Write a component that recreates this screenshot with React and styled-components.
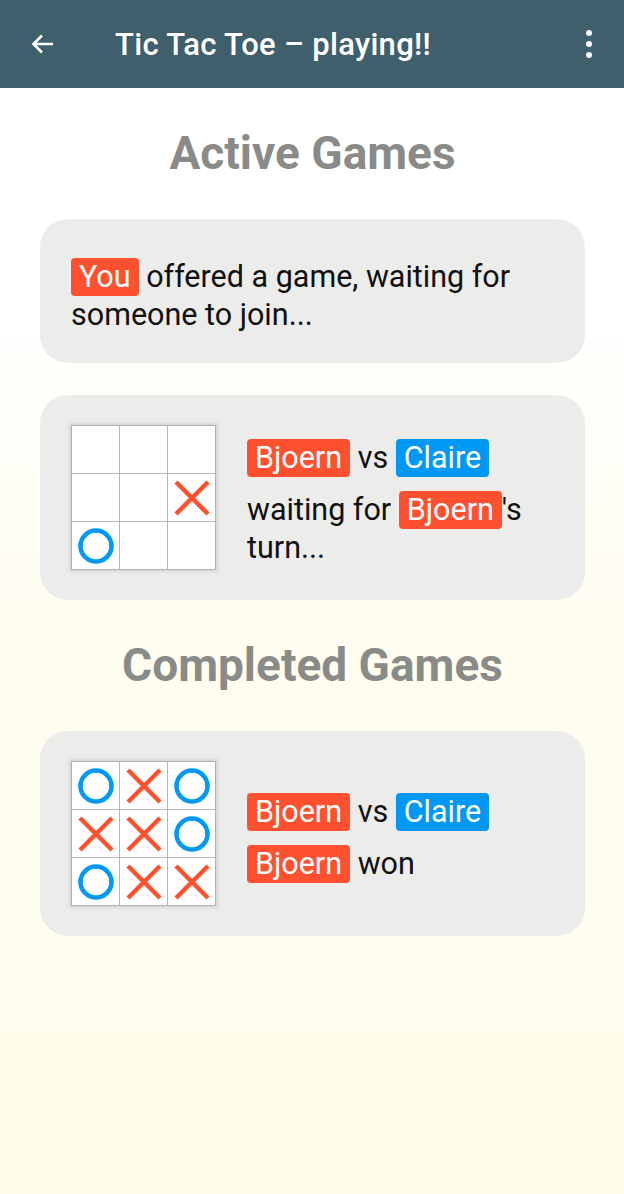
import React from 'react'
import styled, { createGlobalStyle } from 'styled-components'

const GlobalStyle = createGlobalStyle`
  html, body {
    margin: 0;
    padding: 0;
  }
  body {
    font-family: Roboto, "Noto Sans", "Liberation Sans", sans-serif;
    background: #fffdee;
  }
`

const ORANGE = '#ff512f'
const BLUE = '#0098f5'

const activeBoard = [
  '', '', '',
  '', '', 'x',
  'o', '', ''
]

const doneBoard = [
  'o', 'x', 'o',
  'x', 'x', 'o',
  'o', 'x', 'x'
]

function Mark({ kind }) {
  if (kind === 'o') {
    return (
      <svg width="40" height="40" viewBox="0 0 40 40">
        <circle cx="20" cy="20" r="15.5" fill="none" stroke={BLUE} strokeWidth="4.5" />
      </svg>
    )
  }
  if (kind === 'x') {
    return (
      <svg width="40" height="40" viewBox="0 0 40 40">
        <path d="M4 4 L36 36 M36 4 L4 36" stroke={ORANGE} strokeWidth="4.5" />
      </svg>
    )
  }
  return null
}

function Board({ cells }) {
  return (
    <BoardGrid>
      {cells.map((c, i) => (
        <Cell key={i}><Mark kind={c} /></Cell>
      ))}
    </BoardGrid>
  )
}

function App() {
  return (
    <Page>
      <GlobalStyle />
      <TopBar>
        <IconBtn>
          <svg width="26" height="26" viewBox="0 0 26 26">
            <path d="M23 13H3.5 M12 4.5 L3.5 13 L12 21.5" fill="none" stroke="#fff" strokeWidth="2.6" />
          </svg>
        </IconBtn>
        <Title>Tic Tac Toe – playing!!</Title>
        <MenuBtn>
          <Dot /><Dot /><Dot />
        </MenuBtn>
      </TopBar>

      <Content>
        <Heading>Active Games</Heading>
        <Card>
          <Text>
            <Tag color={ORANGE}>You</Tag> offered a game, waiting for someone to join...
          </Text>
        </Card>
        <Card>
          <Board cells={activeBoard} />
          <Text>
            <Line><Tag color={ORANGE}>Bjoern</Tag> vs <Tag color={BLUE}>Claire</Tag></Line>
            waiting for <Tag color={ORANGE}>Bjoern</Tag>'s turn...
          </Text>
        </Card>

        <Heading>Completed Games</Heading>
        <Card>
          <Board cells={doneBoard} />
          <Text>
            <Line><Tag color={ORANGE}>Bjoern</Tag> vs <Tag color={BLUE}>Claire</Tag></Line>
            <Line><Tag color={ORANGE}>Bjoern</Tag> won</Line>
          </Text>
        </Card>
      </Content>
    </Page>
  )
}

export default App

const Page = styled.div`
  min-height: 1194px;
  background: linear-gradient(180deg, #ffffff 0px, #ffffff 300px, #fffdf0 620px, #fffdeb 1194px);
`

const TopBar = styled.header`
  height: 88px;
  background: #3e5f6b;
  display: flex;
  align-items: center;
  color: #fff;
  box-sizing: border-box;
`

const IconBtn = styled.div`
  width: 26px;
  height: 26px;
  margin-left: 30px;
  display: flex;
`

const Title = styled.h1`
  margin: 0 0 0 59px;
  flex: 1;
  font-size: 31px;
  font-weight: 500;
  letter-spacing: 0.3px;
`

const MenuBtn = styled.div`
  width: 8px;
  margin-right: 31px;
  display: flex;
  flex-direction: column;
  gap: 5px;
  align-items: center;
`

const Dot = styled.span`
  width: 6px;
  height: 6px;
  border-radius: 50%;
  background: #fff;
`

const Content = styled.main`
  padding: 32px 39px 0 40px;
  display: flex;
  flex-direction: column;
`

const Heading = styled.h2`
  margin: 6px 0 39px;
  text-align: center;
  font-size: 46px;
  font-weight: 700;
  color: #8a8b88;
  line-height: 54px;
`

const Card = styled.section`
  background: #ecedea;
  border-radius: 28px;
  padding: 30px 31px;
  min-height: 83px;
  margin-bottom: 32px;
  display: flex;
  align-items: center;
  gap: 31px;
`

const Text = styled.div`
  font-size: 30.5px;
  line-height: 37px;
  color: #111;
  padding-top: 9px;
`

const Line = styled.div`
  margin-bottom: 14px;
  &:last-child {
    margin-bottom: 0;
  }
`

const Tag = styled.span`
  display: inline-block;
  background: ${p => p.color};
  color: #fff;
  border-radius: 4px;
  padding: 0 8px;
  line-height: 38px;
`

const BoardGrid = styled.div`
  flex: none;
  display: grid;
  grid-template-columns: repeat(3, 47px);
  grid-template-rows: repeat(3, 47px);
  gap: 1px;
  background: #b7b7b5;
  border: 1px solid #b0b0ae;
  box-shadow: 0 0 3px 2px rgba(0, 0, 0, 0.09);
`

const Cell = styled.div`
  background: #fff;
  display: flex;
  align-items: center;
  justify-content: center;
`
